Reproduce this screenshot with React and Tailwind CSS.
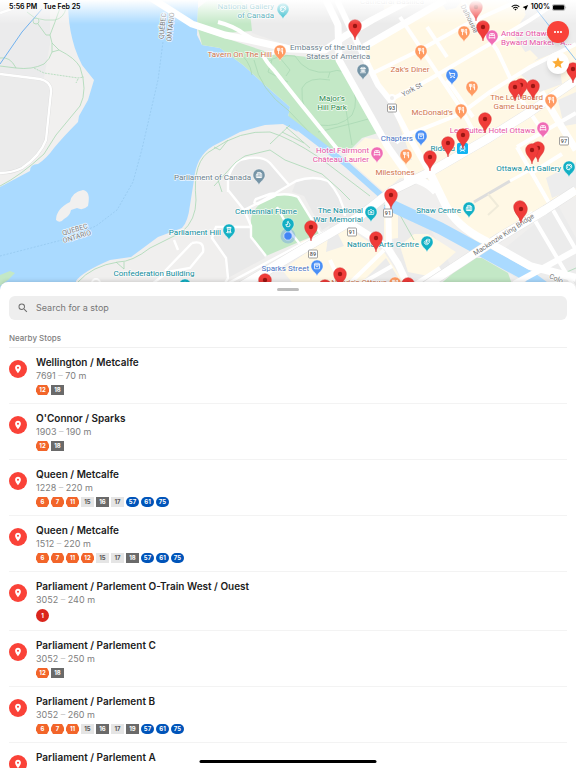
import React, { useState } from 'react';
import {
  Utensils,
  ShoppingCart,
  ShoppingBag,
  BedDouble,
  Landmark,
  ChessRook,
  Palette,
  Drama,
  Flame,
  Building2,
  Camera,
  TrainFront
} from 'lucide-react';
import { MdSearch, MdPlace, MdStar, MdMoreHoriz, MdWifi, MdNearMe } from 'react-icons/md';

const stops = [
  { name: 'Wellington / Metcalfe', code: '7691', distance: '70 m', routes: ['12o', '18d'] },
  { name: "O'Connor / Sparks", code: '1903', distance: '190 m', routes: ['12o', '18d'] },
  { name: 'Queen / Metcalfe', code: '1228', distance: '220 m', routes: ['6o', '7o', '11o', '15l', '16d', '17l', '57b', '61b', '75b'] },
  { name: 'Queen / Metcalfe', code: '1512', distance: '220 m', routes: ['6o', '7o', '11o', '12o', '15l', '17l', '18d', '57b', '61b', '75b'] },
  { name: 'Parliament / Parlement O-Train West / Ouest', code: '3052', distance: '240 m', routes: ['1t'] },
  { name: 'Parliament / Parlement C', code: '3052', distance: '250 m', routes: ['12o', '18d'] },
  { name: 'Parliament / Parlement B', code: '3052', distance: '260 m', routes: ['6o', '7o', '11o', '15l', '16d', '17l', '19d', '57b', '61b', '75b'] },
  { name: 'Parliament / Parlement A' }
];

// o = frequent, d = local, l = limited, b = rapid, t = train
const badgeStyles = {
  o: 'h-[10px] min-w-[13px] px-[3px] bg-[#f2652a] text-white [clip-path:polygon(2px_0,calc(100%-2px)_0,100%_35%,100%_65%,calc(100%-2px)_100%,2px_100%,0_65%,0_35%)]',
  d: 'h-[10px] min-w-[13px] px-[2px] bg-[#6a6a6a] text-white',
  l: 'h-[10px] min-w-[13px] px-[2px] bg-[#e5e5e5] text-[#555555]',
  b: 'h-[10px] min-w-[13px] px-[2px] bg-[#0054b9] text-white rounded-full',
  t: 'h-[13px] w-[13px] bg-[#da251c] text-white rounded-full'
};

const RouteBadge = ({ route }) => {
  const kind = route.slice(-1);
  return (
    <span className={`flex items-center justify-center text-[6px] leading-none font-bold ${badgeStyles[kind]}`}>
      {route.slice(0, -1)}
    </span>
  );
};

const colors = {
  orange: '#ff9a61',
  teal: '#12b0c4',
  pink: '#f06db5',
  blue: '#4a8ff5',
  slate: '#7594a6'
};

const textColors = {
  orange: '#d0744d',
  teal: '#0f8d9c',
  pink: '#e754a5',
  blue: '#4a74c4',
  slate: '#6b7f8c',
  green: '#2f8a4c',
  grey: '#999999'
};

const places = [
  { x: 283, y: 10, icon: Palette, color: 'teal' },
  { x: 280, y: 52, icon: Utensils, color: 'orange' },
  { x: 363, y: 71, icon: Landmark, color: 'slate' },
  { x: 421, y: 52, icon: Utensils, color: 'orange' },
  { x: 464, y: 33, icon: Utensils, color: 'orange' },
  { x: 492, y: 37, icon: BedDouble, color: 'pink' },
  { x: 452, y: 76, icon: ShoppingCart, color: 'blue' },
  { x: 472, y: 88, icon: Utensils, color: 'orange' },
  { x: 551, y: 101, icon: Utensils, color: 'orange' },
  { x: 461, y: 111, icon: Utensils, color: 'orange' },
  { x: 421, y: 137, icon: ShoppingBag, color: 'blue' },
  { x: 543, y: 129, icon: BedDouble, color: 'pink' },
  { x: 377, y: 154, icon: BedDouble, color: 'pink' },
  { x: 406, y: 156, icon: Utensils, color: 'orange' },
  { x: 569, y: 168, icon: Palette, color: 'teal' },
  { x: 259, y: 176, icon: Building2, color: 'slate' },
  { x: 229, y: 231, icon: ChessRook, color: 'teal' },
  { x: 288, y: 225, icon: Flame, color: 'teal' },
  { x: 371, y: 213, icon: Camera, color: 'teal' },
  { x: 469, y: 209, icon: Building2, color: 'teal' },
  { x: 427, y: 243, icon: Drama, color: 'teal' },
  { x: 317, y: 267, icon: ShoppingBag, color: 'blue' },
  { x: 395, y: 284, icon: Utensils, color: 'orange' },
  { x: 185, y: 286, icon: Landmark, color: 'teal' }
];

const labels = [
  { x: 274, y: 9, anchor: 'end', color: 'teal', lines: ['National Gallery', 'of Canada'] },
  { x: 392, y: 4, anchor: 'middle', color: 'grey', lines: ['Cathedral Basilica'] },
  { x: 272, y: 57, anchor: 'end', color: 'orange', lines: ['Tavern On The Hill'] },
  { x: 370, y: 50, anchor: 'end', color: 'slate', lines: ['Embassy of the United', 'States of America'] },
  { x: 332, y: 101, anchor: 'middle', color: 'green', lines: ["Major's", 'Hill Park'] },
  { x: 369, y: 153, anchor: 'end', color: 'pink', lines: ['Hotel Fairmont', 'Château Laurier'] },
  { x: 410, y: 72, anchor: 'middle', color: 'orange', lines: ["Zak's Diner"] },
  { x: 501, y: 36, anchor: 'start', color: 'pink', lines: ['Andaz Ottawa', 'Byward Market - A...'] },
  { x: 453, y: 115, anchor: 'end', color: 'orange', lines: ["McDonald's"] },
  { x: 543, y: 100, anchor: 'end', color: 'orange', lines: ['The Loft Board', 'Game Lounge'] },
  { x: 535, y: 133, anchor: 'end', color: 'pink', lines: ['Les Suites Hotel Ottawa'] },
  { x: 413, y: 141, anchor: 'end', color: 'blue', lines: ['Chapters'] },
  { x: 455, y: 151, anchor: 'end', color: 'teal', lines: ['Rideau'] },
  { x: 395, y: 175, anchor: 'middle', color: 'orange', lines: ['Milestones'] },
  { x: 561, y: 171, anchor: 'end', color: 'teal', lines: ['Ottawa Art Gallery'] },
  { x: 251, y: 180, anchor: 'end', color: 'slate', lines: ['Parliament of Canada'] },
  { x: 266, y: 214, anchor: 'middle', color: 'teal', lines: ['Centennial Flame'] },
  { x: 221, y: 235, anchor: 'end', color: 'teal', lines: ['Parliament Hill'] },
  { x: 363, y: 213, anchor: 'end', color: 'teal', lines: ['The National', 'War Memorial'] },
  { x: 461, y: 213, anchor: 'end', color: 'teal', lines: ['Shaw Centre'] },
  { x: 419, y: 247, anchor: 'end', color: 'teal', lines: ['National Arts Centre'] },
  { x: 309, y: 271, anchor: 'end', color: 'blue', lines: ['Sparks Street'] },
  { x: 387, y: 285, anchor: 'end', color: 'orange', lines: ["Nando's Ottawa"] },
  { x: 154, y: 276, anchor: 'middle', color: 'teal', lines: ['Confederation Building'] }
];

const streetLabels = [
  { text: 'QUÉBEC', x: 163, y: 26, angle: -84 },
  { text: 'ONTARIO', x: 171, y: 27, angle: -84 },
  { text: 'QUEBEC', x: 75, y: 230, angle: -17 },
  { text: 'ONTARIO', x: 77, y: 237, angle: -17 },
  { text: 'York St', x: 412, y: 90, angle: -29 },
  { text: 'Dalhousie', x: 469, y: 19, angle: 64 },
  { text: 'Mackenzie King Bridge', x: 504, y: 235, angle: -33 },
  { text: 'Colo', x: 556, y: 279, angle: 22 }
];

const shields = [
  { n: '93', x: 392, y: 108 },
  { n: '97', x: 564, y: 141 },
  { n: '91', x: 388, y: 213 },
  { n: '91', x: 352, y: 232 },
  { n: '89', x: 313, y: 254 }
];

const stopPins = [
  [476, 8], [355, 27], [483, 28], [573, 70], [521, 86], [515, 88], [533, 87], [485, 120],
  [463, 136], [448, 144], [430, 158], [538, 149], [532, 151], [391, 196], [311, 228],
  [376, 239], [520, 208], [521, 210], [265, 281], [325, 287], [408, 285], [340, 275]
];

const PlacePin = ({ x, y, color, icon: Icon }) => (
  <g>
    <path
      d={`M${x} ${y + 9}C${x - 1} ${y + 5} ${x - 6} ${y + 4} ${x - 6} ${y - 1}A6 6 0 1 1 ${x + 6} ${y - 1}C${x + 6} ${y + 4} ${x + 1} ${y + 5} ${x} ${y + 9}Z`}
      fill={colors[color]}
      stroke="#ffffff"
      strokeOpacity="0.6"
      strokeWidth="0.6"
    />
    <Icon x={x - 3.5} y={y - 4.5} width={7} height={7} color="#ffffff" strokeWidth={3} />
  </g>
);

const StopPin = ({ x, y }) => (
  <g>
    <path
      d={`M${x} ${y + 13}C${x - 0.5} ${y + 7} ${x - 6.3} ${y + 5} ${x - 6.3} ${y - 1}A6.3 6.3 0 1 1 ${x + 6.3} ${y - 1}C${x + 6.3} ${y + 5} ${x + 0.5} ${y + 7} ${x} ${y + 13}Z`}
      fill="#f03c39"
      stroke="#d43434"
      strokeWidth="0.5"
    />
    <circle cx={x} cy={y - 1} r="2.2" fill="#9c1613" />
  </g>
);

const CityMap = () => (
  <svg viewBox="0 0 576 292" preserveAspectRatio="xMidYMid slice" className="block w-full h-full font-[Roboto,sans-serif]" role="img" aria-label="Map of nearby stops">
    <rect width="576" height="292" fill="#aadaff" />

    {/* Quebec shore */}
    <path d="M0 0H68C68 18 70 42 82 65L94 80L88 100L79 116L78 122Q64 136 54 148Q47 158 38 164Q30 164 30 171L0 187Z" fill="#f1f0ef" />
    <path d="M0 0H50V44L44 78L0 73Z" fill="#ebebec" />
    <path d="M0 74L40 79Q52 82 51 92L46 140Q40 156 22 168Q12 173 0 173Z" fill="#ebebeb" />
    <path d="M0 74L40 79Q52 82 51 92L46 140Q40 156 22 168Q12 173 0 173M0 13L20 6" fill="none" stroke="#dddddd" strokeWidth="3.2" />
    <path d="M0 74L40 79Q52 82 51 92L46 140Q40 156 22 168Q12 173 0 173M0 13L20 6" fill="none" stroke="#ffffff" strokeWidth="2.4" />
    <g fill="none" stroke="#a9d8b4" strokeWidth="0.8">
      <path d="M0 58Q10 56 16 68Q32 70 44 64Q50 59 52 52L59 50L52 43L50 35L55 22L60 8M50 35L46 35L38 24M52 43V52M59 50Q75 58 80 67Q88 90 80 106L56 135L44 154Q20 176 0 186M27 12L35 18Q45 21 55 20Q64 18 66 8M0 66L16 68" />
      <path d="M34 68L44 73L78 78L84 77M78 79L76 83" strokeDasharray="2 1" />
      <circle cx="36" cy="21" r="3" />
    </g>
    <path d="M0 64L22 32L42 9" fill="none" stroke="#6fb0ee" strokeWidth="1" />
    <path d="M56 220Q56 209 70 202Q72 192 83 190Q91 191 88 206Q83 211 77 208L71 210Q70 216 64 219Q60 224 56 220Z" fill="#f1f0ef" />
    <path d="M163 42L158 80L142 149L133 182L117 210L96 226L62 240L0 256" fill="none" stroke="#92c6ec" strokeWidth="0.7" strokeDasharray="2 1.5" />
    <path d="M0 275L10 271L15 273L8 280L0 286Z" fill="#c3e8c6" />

    {/* Ottawa side */}
    <path d="M76 292V281Q82 272 110 260L131 257L158 237L182 228Q188 222 190 205L194 180Q196 156 213 146L240 132L265 125L283 124L298 132L288 118L290 107L265 85L243 65L220 48L202 45L197 35L198 8V0H576V292Z" fill="#f0efee" />
    <path d="M235 0H330L345 28L332 46L290 46L252 33Z" fill="#ebebeb" />
    <path d="M198 8L208 0H240L250 12L252 31L225 33L197 25Z" fill="#c3e8c6" />
    <path d="M198 29L225 38L270 53L336 60L378 133L362 138L350 150H330L288 118L290 107L265 85L243 65L220 48L202 45Z" fill="#c3e8c6" />

    {/* Lowertown and ByWard Market */}
    <path d="M360 50L440 0H576V196L480 244L455 224L432 180L400 178L384 192L345 157L365 138L384 140Z" fill="#fff8e5" />
    <path d="M336 56L358 46L374 76L392 106L412 160L400 160L384 138ZM330 0H440L364 46L345 35Z" fill="#ebebeb" />
    <path d="M505 0H576V44L532 62L513 34L526 14ZM520 74L546 58L560 70L562 84L540 92ZM558 100L576 92V124L564 126ZM546 178L576 162V188L552 198ZM440 0H462L456 8L446 10Z" fill="#ededed" />
    <path d="M384 10L402 8L420 0H384Z" fill="#f6f2e6" />
    <path d="M500 10L526 4L524 18L506 24ZM512 58L530 50L538 58L520 72Z" fill="#fff8e5" />

    {/* downtown south of the canal */}
    <path d="M300 242L345 226L384 252L404 282V292H300L282 270L310 250Z" fill="#fff8e5" />
    <path d="M330 222L384 196V245L354 222L338 234L344 246L326 252ZM364 280L386 258L402 284V292H364Z" fill="#ebebeb" />
    <path d="M392 205L430 228L452 268L405 282L394 250Z" fill="#ebebeb" />
    <path d="M384 212L398 214L398 238L384 240Z" fill="#fff8e5" />
    <path d="M400 246L414 234L428 234L456 252L440 266L428 276L408 272Z" fill="#fff8e5" />
    <path d="M500 252L558 205L576 238V292H540L490 262Z" fill="#ececec" />
    <path d="M436 288L470 258L482 258L508 273L514 290Z" fill="#c3e8c6" />

    {/* Parliament grounds */}
    <path d="M228 178Q234 158 244 158Q262 154 270 163L289 185L260 202L244 210L228 190ZM296 182Q314 176 328 181Q340 196 345 216L322 230L304 196L292 192ZM250 227H216L212 236L226 258L228 278L265 258Z" fill="#e9e9e9" />
    <path d="M270 196Q288 192 298 197L320 233L266 256L251 237L251 219Q252 208 270 196Z" fill="#c3e8c6" />
    <g fill="none" stroke="#ffffff" strokeWidth="2.4">
      <path d="M228 192V178Q234 160 244 159Q262 155 270 163L289 185M228 190L244 210L251 226L251 237L266 256M244 210L262 201L296 181Q314 175 328 181Q342 196 345 216M270 196Q288 192 298 197L320 233M250 227H216L212 238L226 258L228 278L220 292M256 199Q252 204 258 204L275 196Q276 192 270 194ZM277 207L292 234L306 252M174 240L178 250M192 243Q205 240 203 252L190 268L168 272L152 284M192 243L165 271" />
      <path d="M225 285L320 234L338 226" />
    </g>
    <g fill="none" stroke="#a9d8b4" strokeWidth="0.8">
      <path d="M214 147L220 150L228 140M218 180L222 192M214 186L236 162L245 156L270 150L285 160L322 174L340 190L350 200M270 144L290 125M282 132L304 143M286 127L310 148M78 282Q92 266 118 262Q132 262 150 248L182 232M116 262L124 269V262M182 232Q196 220 196 200Q192 160 212 150Q240 130 270 132Q290 138 320 158L370 196M266 63Q278 54 295 56Q306 75 330 72Q345 66 350 82Q360 100 352 115Q340 128 318 125Q300 112 302 88Q308 76 330 80M330 72L328 78M272 60L268 72L288 82M280 58L290 70L286 76M254 60Q260 90 288 110L312 135M318 132L350 124L372 118M346 110L352 145M236 50Q250 60 252 75M384 205L400 215L414 240M552 292L560 275L576 268" />
    </g>

    {/* canal */}
    <path d="M286 118L320 144L345 163L382 196" fill="none" stroke="#aadaff" strokeWidth="6" />
    <path d="M386 203L440 228L484 252L530 277L556 296" fill="none" stroke="#aadaff" strokeWidth="12" />

    {/* minor streets */}
    <g fill="none" stroke="#ffffff" strokeWidth="4">
      <path d="M263 55Q266 62 274 70L300 103L338 150M263 55L276 52M218 22Q234 26 244 34L258 42" />
      <path d="M373 73L420 50L465 25L520 0M394 98L430 79L488 45L530 20L560 0M396 143Q404 134 417 131L460 114L490 92L530 67L576 44" />
      <path d="M400 17L460 107L474 132M427 27L447 57M447 80L473 117" />
      <path d="M462 0L497 50L518 95L546 136M517 147L576 113M517 147L557 217L576 250M530 174L562 154" />
      <path d="M345 288L384 250M364 282L392 266M330 260L345 292M530 212L576 290M406 290L440 268" />
    </g>
    <path d="M474 202L510 181" stroke="#dddddd" strokeWidth="3" />
    <path d="M510 181L530 170" stroke="#ffffff" strokeWidth="3" />
    <path d="M488 194L498 206L488 215" fill="none" stroke="#f0ebda" strokeWidth="2" />

    {/* main roads */}
    <g fill="none" stroke="#e3e3e3" strokeWidth="9.4" strokeLinejoin="round">
      <path d="M228 294L310 245L360 216L393 190L430 172L487 139L530 112L576 80" />
      <path d="M416 292L500 237L545 210L576 190" />
    </g>
    <g fill="none" stroke="#ffffff" strokeLinejoin="round">
      <path d="M145 -6L192 24L225 35L250 40L290 49L325 50L345 36L372 20L410 0M364 47L445 0" strokeWidth="7" />
      <path d="M325 -2L338 25L339 60L388 147L410 178" strokeWidth="7" />
      <path d="M337 0L350 28L378 85L390 100L407 133L430 173" strokeWidth="6" />
      <path d="M228 294L310 245L360 216L393 190L430 172L487 139L530 112L576 80" strokeWidth="8.6" />
      <path d="M416 292L500 237L545 210L576 190" strokeWidth="8.6" />
      <path d="M388 194L389 248" strokeWidth="6" />
      <path d="M345 220L387 247L398 264L412 294" strokeWidth="7" />
      <path d="M430 173L445 204Q456 226 484 240L530 266L576 278M404 178Q424 178 436 192" strokeWidth="8" />
      <path d="M514 284L576 250" strokeWidth="6" />
      <path d="M541 92L560 124L576 150" strokeWidth="7" />
    </g>
    <path d="M532 4L576 60" stroke="#6fb0ee" strokeWidth="0.8" />
    <g fill="#f0efee" stroke="#ffffff" strokeWidth="2">
      <circle cx="96" cy="283" r="4" />
      <circle cx="112" cy="286" r="3" />
      <circle cx="392" cy="98" r="3" />
    </g>

    <g fontSize="7" fill="#7b7b7b" stroke="#ffffff" strokeOpacity="0.8" strokeWidth="1.6" paintOrder="stroke" textAnchor="middle">
      {streetLabels.map((s, i) => (
        <text key={i} x={s.x} y={s.y} transform={`rotate(${s.angle} ${s.x} ${s.y})`} dominantBaseline="middle">{s.text}</text>
      ))}
    </g>

    <g fontSize="8" stroke="#ffffff" strokeOpacity="0.8" strokeWidth="1.6" strokeLinejoin="round" paintOrder="stroke">
      {labels.map((l) => (
        <text key={l.lines[0]} fill={textColors[l.color]} textAnchor={l.anchor}>
          {l.lines.map((line, i) => (
            <tspan key={line} x={l.x} y={l.y + i * 9}>{line}</tspan>
          ))}
        </text>
      ))}
    </g>

    {shields.map((s, i) => (
      <g key={i}>
        <rect x={s.x - 4.5} y={s.y - 4} width="9" height="8" rx="1" fill="#ffffff" stroke="#7a7a7a" strokeWidth="0.7" />
        <text x={s.x} y={s.y + 2} fontSize="5.5" fontWeight="500" fill="#555555" textAnchor="middle">{s.n}</text>
      </g>
    ))}

    {places.map((p, i) => (
      <PlacePin key={i} {...p} />
    ))}

    <rect x="457" y="143" width="11" height="11" rx="1.5" fill="#10b4f2" />
    <TrainFront x={459} y={145} width={7} height={7} color="#ffffff" strokeWidth={3} />

    <circle cx="288" cy="236" r="7.5" fill="#4a86f0" fillOpacity="0.3" />
    <circle cx="288" cy="236" r="4.2" fill="#4285f4" stroke="#d6e5ff" strokeWidth="0.8" />

    {stopPins.map(([x, y]) => (
      <StopPin key={`${x}-${y}`} x={x} y={y} />
    ))}
  </svg>
);

const StatusBar = () => (
  <div className="absolute inset-x-0 top-0 h-6 px-[9px] pt-px flex items-start justify-between bg-linear-to-b from-white to-white/0 text-[7px] leading-3 font-semibold text-black">
    <div className="flex gap-[6px]">
      <span>5:56 PM</span>
      <span>Tue Feb 25</span>
    </div>
    <div className="flex items-center gap-[2px]">
      <MdWifi className="w-[9px] h-[9px]" />
      <MdNearMe className="w-[7px] h-[7px]" />
      <span>100%</span>
      <svg viewBox="0 0 15 7" className="w-[15px] h-[7px]">
        <rect x="0.3" y="0.5" width="12.6" height="6" rx="1.6" fill="none" stroke="#888888" strokeWidth="0.5" />
        <rect x="1" y="1.2" width="11.2" height="4.6" rx="1" fill="#000000" />
        <path d="M13.6 2.4Q14.8 3.5 13.6 4.6Z" fill="#888888" />
      </svg>
    </div>
  </div>
);

const StopRow = ({ stop }) => (
  <li className="border-b border-[#f3f3f3]">
    <button type="button" className="w-full flex items-start gap-[9px] pt-[7px] pb-2 text-left">
      <span className="mt-[5px] w-[18px] h-[18px] shrink-0 rounded-full bg-[#fa4238] flex items-center justify-center">
        <MdPlace className="w-[10px] h-[10px] text-white" />
      </span>
      <span className="min-w-0">
        <span className="block text-[10px] leading-[15px] font-semibold text-[#1c1c1c]">{stop.name}</span>
        {stop.code && (
          <span className="block text-[9px] leading-3 text-[#808080]">
            {stop.code} <span className="text-[#c4c4c4]">–</span> {stop.distance}
          </span>
        )}
        {stop.routes && (
          <span className="mt-[3px] flex gap-[2px]">
            {stop.routes.map((route) => (
              <RouteBadge key={route} route={route} />
            ))}
          </span>
        )}
      </span>
    </button>
  </li>
);

const App = () => {
  const [query, setQuery] = useState('');

  return (
    <div className="relative h-screen flex flex-col overflow-hidden bg-white font-[Inter,sans-serif]">
      <div className="relative h-[292px] shrink-0">
        <CityMap />
        <StatusBar />
        <div className="absolute top-[21px] right-[7px] flex flex-col gap-[9px]">
          <button type="button" aria-label="More options" className="w-[22px] h-[22px] rounded-full bg-[#f9423a] text-white shadow-md flex items-center justify-center">
            <MdMoreHoriz className="w-3 h-3" />
          </button>
          <button type="button" aria-label="Favourites" className="w-[22px] h-[22px] rounded-full bg-white text-[#fbab35] shadow-md flex items-center justify-center">
            <MdStar className="w-[14px] h-[14px]" />
          </button>
        </div>
      </div>

      <main className="relative -mt-[10px] flex-1 min-h-0 flex flex-col rounded-t-lg bg-white pt-[6px] px-[9px] shadow-[0_-1px_4px_rgba(0,0,0,0.15)]">
        <div className="mx-auto w-[22px] h-[3px] shrink-0 rounded-full bg-[#bdbdbd]" />
        <div className="mt-[5px] h-6 shrink-0 flex items-center gap-[7px] px-2 rounded-md bg-[#eeeeee]">
          <MdSearch className="w-3 h-3 text-[#6e6e6e]" />
          <input
            type="text"
            aria-label="Search for a stop"
            value={query}
            onChange={(e) => setQuery(e.target.value)}
            placeholder="Search for a stop"
            className="flex-1 min-w-0 bg-transparent text-[9px] leading-3 text-[#333333] placeholder:text-[#777777] outline-none"
          />
        </div>
        <h2 className="mt-3 pb-[3px] shrink-0 text-[8px] leading-3 font-medium text-[#808080] border-b border-[#f0f0f0]">Nearby Stops</h2>
        <ul className="flex-1 min-h-0 overflow-hidden">
          {stops.map((stop, i) => (
            <StopRow key={i} stop={stop} />
          ))}
        </ul>
      </main>

      <div className="absolute bottom-[5px] left-1/2 -translate-x-1/2 w-[177px] h-[3px] rounded-full bg-black" />
    </div>
  );
};

export default App;
